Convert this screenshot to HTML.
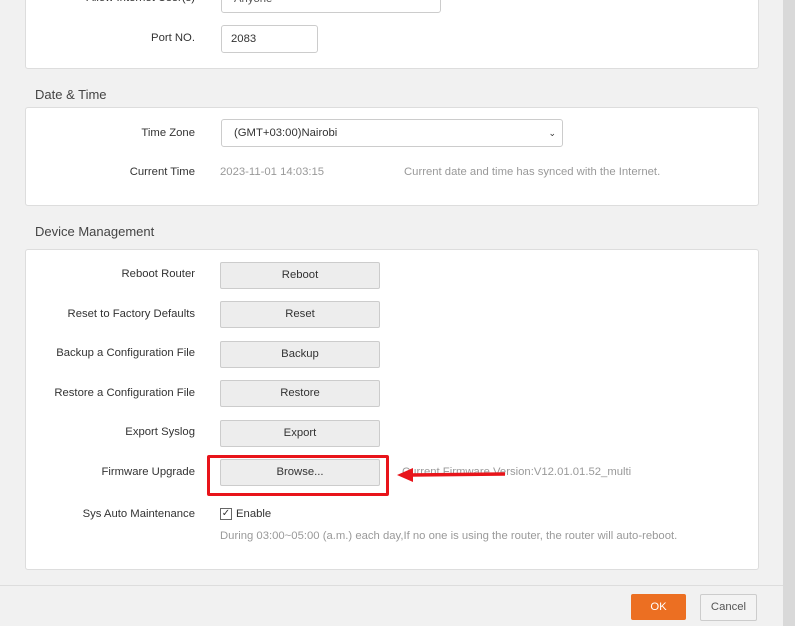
<!DOCTYPE html><html><head><style>
body{margin:0;width:795px;height:626px;background:#f1f1f1;font-family:"Liberation Sans",sans-serif;font-size:11.3px;color:#333;position:relative;overflow:hidden}
.a{position:absolute}
.card{position:absolute;left:25px;width:732px;background:#fff;border:1px solid #ddd;border-radius:3px}
.lbl{position:absolute;right:600px;text-align:right;white-space:nowrap}
.btn{position:absolute;left:220px;width:158px;height:25px;background:#ededed;border:1px solid #ccc;border-radius:2px;text-align:center;line-height:25px}
.h{position:absolute;left:35px;font-size:13px;color:#444}
.g{color:#999}
</style></head><body>
<div class="card" style="top:-5px;height:72px"></div>
<div class="lbl" style="top:-8px">Allow Internet User(s)</div>
<div class="a" style="left:221px;top:-10px;width:218px;height:21px;border:1px solid #ccc;border-radius:3px;background:#fff;line-height:16px;text-indent:12px;color:#555">Anyone</div>
<div class="lbl" style="top:32px">Port NO.</div>
<div class="a" style="left:221px;top:25px;width:95px;height:26px;border:1px solid #ccc;border-radius:3px;background:#fff;line-height:26px;text-indent:9px">2083</div>
<div class="h" style="top:87px">Date &amp; Time</div>
<div class="card" style="top:107px;height:97px"></div>
<div class="lbl" style="top:127px">Time Zone</div>
<div class="a" style="left:221px;top:119px;width:340px;height:26px;border:1px solid #ccc;border-radius:3px;background:#fff;line-height:26px;text-indent:12px">(GMT+03:00)Nairobi<span style="position:absolute;right:6px;font-size:9px">&#8964;</span></div>
<div class="lbl" style="top:166px">Current Time</div>
<div class="a g" style="left:220px;top:166px">2023-11-01 14:03:15</div>
<div class="a g" style="left:404px;top:166px">Current date and time has synced with the Internet.</div>
<div class="h" style="top:224px">Device Management</div>
<div class="card" style="top:249px;height:319px"></div>
<div class="lbl" style="top:268px">Reboot Router</div><div class="btn" style="top:262px">Reboot</div>
<div class="lbl" style="top:308px">Reset to Factory Defaults</div><div class="btn" style="top:301px">Reset</div>
<div class="lbl" style="top:347px">Backup a Configuration File</div><div class="btn" style="top:341px">Backup</div>
<div class="lbl" style="top:387px">Restore a Configuration File</div><div class="btn" style="top:380px">Restore</div>
<div class="lbl" style="top:426px">Export Syslog</div><div class="btn" style="top:420px">Export</div>
<div class="lbl" style="top:466px">Firmware Upgrade</div><div class="btn" style="top:459px">Browse...</div>
<div class="a g" style="left:402px;top:466px">Current Firmware Version:V12.01.01.52_multi</div>
<div class="a" style="left:207px;top:455px;width:176px;height:35px;border:3px solid #e8141a;border-radius:2px"></div>
<svg class="a" style="left:395px;top:466px" width="115" height="18"><line x1="110" y1="8" x2="16" y2="9" stroke="#e8141a" stroke-width="3.5"/><polygon points="2,9 18,2 18,16" fill="#e8141a"/></svg>
<div class="lbl" style="top:508px">Sys Auto Maintenance</div>
<div class="a" style="left:220px;top:508px;width:10px;height:10px;border:1px solid #666;font-size:10px;line-height:10px;text-align:center">&#10003;</div>
<div class="a" style="left:236px;top:508px">Enable</div>
<div class="a g" style="left:220px;top:530px">During 03:00~05:00 (a.m.) each day,If no one is using the router, the router will auto-reboot.</div>
<div class="a" style="left:0;top:585px;width:783px;height:1px;background:#ddd"></div>
<div class="a" style="left:631px;top:594px;width:55px;height:26px;background:#ec6f22;border-radius:2px;color:#fff;text-align:center;line-height:26px">OK</div>
<div class="a" style="left:700px;top:594px;width:55px;height:25px;background:#f3f3f3;border:1px solid #ccc;border-radius:2px;text-align:center;line-height:25px;color:#555">Cancel</div>
<div class="a" style="left:783px;top:0;width:12px;height:626px;background:#d9d9d9"></div>
</body></html>
